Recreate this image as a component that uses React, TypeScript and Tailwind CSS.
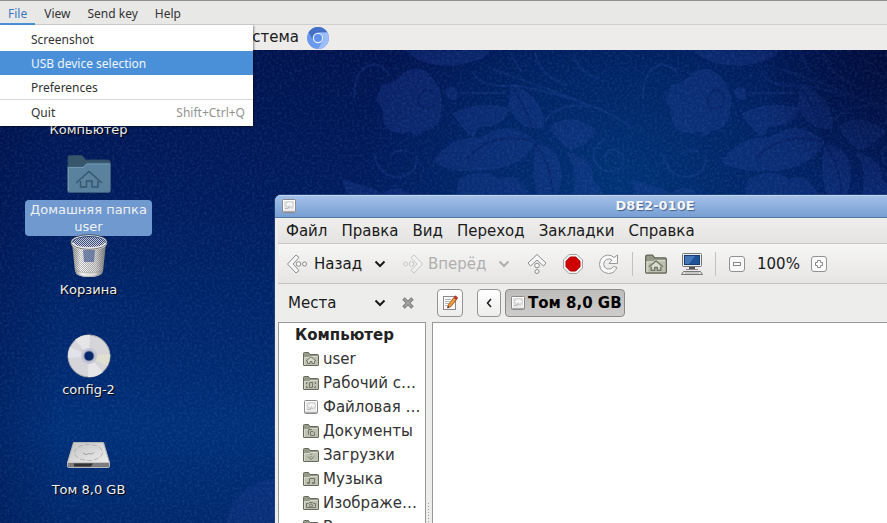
import React from "react";

const INK = "#1a1a1a";

function FolderIcon({ size = 16, children }: { size?: number; children?: React.ReactNode }) {
  return (
    <svg width={size} height={size} viewBox="0 0 16 16" className="shrink-0" aria-hidden="true">
      <path d="M.5 14V2.500Q.5 1.500 1.500 1.500H5.500L7 3.500H14.500Q15.500 3.500 15.500 4.500V14Q15.500 14.500 15 14.500H1Q.5 14.500 .5 14Z" fill="#969a88" stroke="#65685a" />
      <path d="M1 6H6L7 5H15V14H1Z" fill="#bcc0ae" />
      <path d="M1.500 14V6.500H6.500L7.500 5.500H14.500" fill="none" stroke="#d6d9ca" />
      <g fill="none" stroke="#74776a">{children}</g>
    </svg>
  );
}

const HouseGlyph = () => (
  <>
    <path d="M4.500 9V12.500H7V10.500H9V12.500H11.500V9L8 6Z" fill="#d9dccf" stroke="none" />
    <path d="M3 10 8 5.800 13 10M4.500 10V12.500H7V10.500H9V12.500H11.500V10" />
  </>
);

function DriveSmall({ size = 16 }: { size?: number }) {
  return (
    <svg width={size} height={size} viewBox="0 0 16 16" className="shrink-0" aria-hidden="true">
      <rect x="1.500" y="1.500" width="13" height="13" rx="1" fill="#e4e4e4" stroke="#8a8a8a" />
      <path d="M2 12.500H14V14H2Z" fill="#b0b0b0" />
      <rect x="2.500" y="2.500" width="11" height="9.500" fill="none" stroke="#fff" />
      <ellipse cx="8.500" cy="6.500" rx="4" ry="3" fill="#f4f4f4" stroke="#c6c6c6" />
      <path d="M4 10.500H7L8.500 7.500" fill="none" stroke="#b5b5b5" />
    </svg>
  );
}

function Chevron({ color = INK }: { color?: string }) {
  return (
    <svg width="12" height="8" viewBox="0 0 12 8" aria-hidden="true">
      <path d="M1.500 1.500 6 6 10.500 1.500" fill="none" stroke={color} strokeWidth="2" />
    </svg>
  );
}

function ArrowIcon({ className = "", faded = false }: { className?: string; faded?: boolean }) {
  return (
    <svg width="22" height="22" viewBox="0 0 22 22" className={"shrink-0 " + className} opacity={faded ? 0.4 : 1} aria-hidden="true">
      <g fill="#f8f8f8" stroke="#8b8b8b">
        <path d="M10 2 1.500 11 10 20 13 17.500 7 11 13 4.500Z" strokeLinejoin="round" />
        <circle cx="12.500" cy="11" r="2.300" />
        <circle cx="18.500" cy="11" r="2" />
      </g>
    </svg>
  );
}

function StopIcon() {
  return (
    <svg width="22" height="22" viewBox="0 0 22 22" aria-hidden="true">
      <path d="M7 1.500H15L20.500 7V15L15 20.500H7L1.500 15V7Z" fill="#f4f4f4" stroke="#a2a2a2" />
      <path d="M8.300 4H13.700L18 8.300V13.700L13.700 18H8.300L4 13.700V8.300Z" fill="#d00000" stroke="#b00000" />
    </svg>
  );
}

function ReloadIcon() {
  return (
    <svg width="22" height="22" viewBox="0 0 22 22" aria-hidden="true">
      <path
        d="M16 4.500 19.500 2V10.500H11L14 7Q11.500 5 8.500 6.500Q5.500 8.200 5.700 11.500Q6 15 9.500 16Q13.500 16.800 15.500 13.500L19 14.500Q16.500 20.500 10.500 20.500Q2 19.500 1.500 11.500Q1.800 3.500 9.500 2Q13.500 2 16 4.500Z"
        fill="#f8f8f8"
        stroke="#999"
        strokeLinejoin="round"
      />
    </svg>
  );
}

function ComputerIcon() {
  return (
    <svg width="22" height="24" viewBox="0 0 22 24" aria-hidden="true">
      <rect x="1.500" y="1.500" width="19" height="13" rx="1" fill="#ececec" stroke="#777" />
      <rect x="3.500" y="3.500" width="15" height="9" fill="#1f5296" stroke="#163e74" />
      <path d="M4 4H14L8 12H4Z" fill="#4577b8" />
      <path d="M8 15H14V17.500H8Z" fill="#555" />
      <path d="M5 17.500H17" stroke="#888" />
      <path d="M2.500 19.500H19.500L21.500 22.500H.5Z" fill="#e4e4e4" stroke="#777" />
      <path d="M4 21H18" stroke="#aaa" />
    </svg>
  );
}

function ZoomIcon({ plus = false }: { plus?: boolean }) {
  return (
    <svg width="18" height="18" viewBox="0 0 18 18" aria-hidden="true">
      <rect x="1.500" y="1.500" width="15" height="15" rx="2.500" fill="#fafafa" stroke="#929292" />
      {plus ? (
        <path d="M7.500 5.500H10.500V7.500H12.500V10.500H10.500V12.500H7.500V10.500H5.500V7.500H7.500Z" fill="#fff" stroke="#888" />
      ) : (
        <rect x="5.500" y="7.500" width="7" height="3" fill="#fff" stroke="#888" />
      )}
    </svg>
  );
}

function NoteIcon() {
  return (
    <svg width="16" height="16" viewBox="0 0 16 16" aria-hidden="true">
      <rect x="1.500" y="1.500" width="12" height="13" fill="#fcfcfc" stroke="#8a8a8a" />
      <path d="M3 4.500H9M3 6.500H8M3 8.500H7M3 10.500H6" stroke="#b4b4b4" />
      <path d="M5.500 13 6.500 9.500 12 2.500 14.500 4.500 9 11.500Z" fill="#f39a3a" stroke="#8a4b1a" strokeWidth=".8" />
      <path d="M12 2.500 13.500 .8 15.800 2.800 14.500 4.500Z" fill="#d33" stroke="#922" strokeWidth=".6" />
      <path d="M5.500 13 6 11 7.200 12.200Z" fill="#222" />
    </svg>
  );
}

function ChromiumIcon() {
  return (
    <svg width="22" height="22" viewBox="0 0 22 22" aria-hidden="true">
      <circle cx="11" cy="11" r="11" fill="#6a99ee" />
      <path d="M1.500 5.500A11 11 0 0 1 20.500 5.500H11A5.500 5.500 0 0 0 6 13Z" fill="#4471c6" />
      <path d="M20.500 5.500A11 11 0 0 1 11 22L15.800 13.700A5.500 5.500 0 0 0 11 5.500Z" fill="#9dbdf8" />
      <circle cx="11" cy="11" r="5.200" fill="#e6efff" />
      <circle cx="11" cy="11" r="4" fill="#5f90ee" />
    </svg>
  );
}

function HomeFolderLarge() {
  return (
    <svg width="48" height="48" viewBox="0 0 48 48" aria-hidden="true">
      <path d="M3 40V7Q3 5.500 4.500 5.500H16Q17.500 5.500 18.500 7L20.500 10H43Q45 10 45 12V40Z" fill="#38566b" stroke="#2a4862" />
      <path d="M2.500 16.500H18L21.500 13H45.500V40.500Q45.500 42.500 43.500 42.500H4.500Q2.500 42.500 2.500 40.500Z" fill="#5a829f" stroke="#3a5c78" />
      <path d="M3.500 41V17.500H18.500L22 14H44.500" fill="none" stroke="#7096b0" />
      <path d="M11 33 24 21.500 37 33M15.500 31V37H21.500V31H27V37H33V31" fill="none" stroke="#365770" strokeWidth="1.500" />
    </svg>
  );
}

function TrashLarge() {
  return (
    <svg width="48" height="48" viewBox="0 0 48 48" aria-hidden="true">
      <defs>
        <pattern id="mesh" width="2" height="2" patternUnits="userSpaceOnUse">
          <rect width="1" height="1" fill="#777" />
          <rect x="1" y="1" width="1" height="1" fill="#777" />
        </pattern>
        <pattern id="meshInner" width="2" height="2" patternUnits="userSpaceOnUse">
          <rect width="1" height="1" fill="#e4e6ee" />
          <rect x="1" y="1" width="1" height="1" fill="#e4e6ee" />
        </pattern>
        <linearGradient id="can">
          <stop offset="0" stopColor="#8d8d8d" />
          <stop offset=".25" stopColor="#f5f5f5" />
          <stop offset=".7" stopColor="#d8d8d8" />
          <stop offset="1" stopColor="#777" />
        </linearGradient>
      </defs>
      <path d="M7 11 10 39Q11 45 24 45Q37 45 38 39L41 11Z" fill="url(#can)" />
      <path d="M7 11 10 38Q24 44 38 38L41 11Z" fill="url(#mesh)" opacity=".5" />
      <path d="M18 18H30L29 30H19Z" fill="#34508c" opacity=".6" />
      <path d="M10 37Q11 44.500 24 44.500Q37 44.500 38 37Q34 41 24 41Q14 41 10 37Z" fill="url(#can)" stroke="#888" strokeWidth=".5" />
      <ellipse cx="24" cy="10.500" rx="17" ry="6" fill="#3f507e" />
      <ellipse cx="24" cy="10.500" rx="16" ry="5.500" fill="url(#meshInner)" opacity=".8" />
      <path d="M7 11Q9 16.500 24 16.500Q39 16.500 41 11" fill="none" stroke="#e2e2e2" strokeWidth="3" />
      <ellipse cx="24" cy="10" rx="17.500" ry="6.500" fill="none" stroke="#f0f0f0" strokeWidth="1.200" />
      <ellipse cx="24" cy="10" rx="18.300" ry="7.300" fill="none" stroke="#222" strokeWidth=".6" />
    </svg>
  );
}

function DiscLarge() {
  return (
    <svg width="48" height="48" viewBox="0 0 48 48" aria-hidden="true">
      <circle cx="24" cy="24" r="21" fill="#d6d6da" stroke="#a6a6a6" />
      <path d="M24 24 10 8A21 21 0 0 1 25 3ZM24 24 38 40A21 21 0 0 1 23 45Z" fill="#e6e6e8" />
      <path d="M24 24 45 22A21 21 0 0 1 42 34Z" fill="#dfe0cf" />
      <path d="M24 24 3 26A21 21 0 0 1 5 15Z" fill="#e2e2ea" />
      <circle cx="24" cy="24" r="8" fill="#bfc0d2" opacity=".8" />
      <circle cx="24" cy="24" r="5" fill="#06286b" stroke="#7c86a4" />
    </svg>
  );
}

function DriveLarge() {
  return (
    <svg width="48" height="48" viewBox="0 0 48 48" aria-hidden="true">
      <defs>
        <linearGradient id="lid" x1="0" y1="0" x2="1" y2="1">
          <stop offset="0" stopColor="#c4c4c4" />
          <stop offset="1" stopColor="#ececec" />
        </linearGradient>
      </defs>
      <path d="M8.500 10.500H38.500L44.500 30.500H2.500Z" fill="url(#lid)" stroke="#b4b4b4" />
      <ellipse cx="23.500" cy="20.500" rx="14" ry="8" fill="none" stroke="#a8a8a8" strokeWidth=".8" strokeDasharray="5 2" />
      <path d="M18 21Q21 24 24 21.500Q27 23 29 20.500" fill="none" stroke="#a0a0a0" />
      <path d="M2.500 30.500H44.500V34.500Q44.500 35.500 43 35.500H4Q2.500 35.500 2.500 34.500Z" fill="#7d7d7d" stroke="#d0d0d0" strokeWidth=".8" />
      <path d="M9 31.500H28L26 34.500H9Z" fill="#333" />
    </svg>
  );
}

function Wallpaper() {
  const floral = (
    <>
      <g fill="#2a46a0" opacity=".26">
        <path d="M185 30Q260 95 380 62Q420 50 430 30Z" />
        <path d="M120 130Q160 120 180 95Q230 65 262 105Q300 150 290 200Q290 255 235 262Q215 285 205 262Q140 280 122 230Q130 200 104 170Z" />
        <path d="M300 150Q310 125 335 140V170Q310 180 300 150Z" />
        <path d="M322 210Q400 170 485 195Q480 245 400 250L380 280Q345 250 322 210Z" />
        <path d="M490 125Q590 165 585 250Q520 270 482 190Z" />
        <path d="M265 350Q320 270 400 280L440 260Q500 235 560 290Q540 350 450 370Q340 390 265 350Z" />
        <path d="M600 250Q660 200 735 260Q700 310 660 315Q620 290 600 250Z" />
        <path d="M560 300Q640 300 635 400Q630 440 610 462H570Q545 380 560 300Z" />
        <path d="M650 320Q730 340 725 400Q750 420 765 462H660Q690 390 650 320Z" />
        <path d="M340 400Q410 360 460 400Q510 370 555 462H330Z" />
        <path d="M5 400Q90 420 120 440Q180 400 210 462H30Z" />
      </g>
      <g fill="none" stroke="#3b5cb8" strokeWidth="7" opacity=".15" strokeLinecap="round">
        <path d="M40 165Q40 75 100 70Q130 75 140 100" />
        <path d="M345 152H475" />
        <path d="M380 90Q400 140 500 130Q720 170 830 245" />
        <path d="M440 85Q600 140 720 190Q620 180 590 230" />
        <path d="M670 40Q680 90 740 110M560 40Q570 100 650 130M490 40Q500 60 520 90" />
        <path d="M100 330Q110 390 165 392Q220 390 220 335M150 325Q170 310 195 320" />
        <path d="M760 285Q715 310 730 350Q760 390 800 370Q830 335 790 315Q760 310 760 340" />
      </g>
      <g fill="none" stroke="#000c48" strokeWidth="6" opacity=".25">
        <path d="M365 340Q430 260 555 290M560 300Q600 340 610 440M225 165Q250 120 275 165Q275 200 240 195Q220 190 225 165M490 130Q540 200 560 285" />
      </g>
    </>
  );
  return (
    <svg className="absolute inset-0 h-full w-full" viewBox="0 50 887 473" preserveAspectRatio="xMinYMin slice" aria-hidden="true">
      <defs>
        <linearGradient id="sea" x1="0" y1="0" x2="0" y2="1">
          <stop offset="0" stopColor="#00124e" />
          <stop offset=".3" stopColor="#001b5c" />
          <stop offset=".8" stopColor="#002f78" />
          <stop offset="1" stopColor="#00286c" />
        </linearGradient>
        <radialGradient id="glow" cx="620" cy="190" r="260" gradientUnits="userSpaceOnUse">
          <stop offset="0" stopColor="#003478" stopOpacity=".9" />
          <stop offset="1" stopColor="#003478" stopOpacity="0" />
        </radialGradient>
        <radialGradient id="corner" cx="887" cy="60" r="130" gradientUnits="userSpaceOnUse">
          <stop offset="0" stopColor="#000a35" stopOpacity=".8" />
          <stop offset="1" stopColor="#000a35" stopOpacity="0" />
        </radialGradient>
        <linearGradient id="edge">
          <stop offset="0" stopColor="#000a40" stopOpacity=".3" />
          <stop offset="1" stopColor="#000a40" stopOpacity="0" />
        </linearGradient>
        <filter id="grain" x="0" y="0" width="100%" height="100%">
          <feTurbulence type="fractalNoise" baseFrequency=".4" numOctaves="2" seed="4" />
          <feColorMatrix values="0 0 0 0 .15  0 0 0 0 .35  0 0 0 0 .75  1.6 0 0 0 -.65" />
        </filter>
      </defs>
      <rect y="50" width="887" height="473" fill="url(#sea)" />
      <rect y="50" width="887" height="473" fill="url(#glow)" />
      <rect y="50" width="60" height="473" fill="url(#edge)" />
      <g transform="translate(340 40) scale(.349)">{floral}</g>
      <g transform="translate(629 40) scale(.349)">{floral}</g>
      <path d="M225 523Q235 485 275 478V523Z" fill="#2a46a0" opacity=".2" />
      <rect y="50" width="887" height="473" fill="url(#corner)" />
      <rect y="50" width="887" height="473" filter="url(#grain)" opacity=".2" />
    </svg>
  );
}

function DesktopItem({ place, label, icon, selected = false }: { place: string; label: React.ReactNode; icon?: React.ReactNode; selected?: boolean }) {
  return (
    <button type="button" className={"absolute left-[25px] flex w-[127px] flex-col items-center whitespace-nowrap text-[13px] text-[#f0f0f0] " + place}>
      <span className="h-12 w-12">{icon}</span>
      <span
        className={
          selected
            ? "mt-0.5 w-full rounded bg-[#6f99cf] py-px leading-[17px]"
            : "mt-0.5 leading-4 [text-shadow:1px_1px_1px_#000]"
        }
      >
        {label}
      </span>
    </button>
  );
}

const places: { name: string; icon: React.ReactNode }[] = [
  { name: "user", icon: <FolderIcon><HouseGlyph /></FolderIcon> },
  { name: "Рабочий с…", icon: <FolderIcon><path d="M6.500 7.500H9.500V12.500H6.500ZM3.500 9V7.500H4.500M12.500 9V7.500H11.500M3.500 11V12.500H5M12.500 11V12.500H11" /></FolderIcon> },
  { name: "Файловая …", icon: <DriveSmall /> },
  { name: "Документы", icon: <FolderIcon><path d="M5.500 11.500V6.500H9M7.500 12.500V8.500H10L11.500 10V12.500Z" /></FolderIcon> },
  { name: "Загрузки", icon: <FolderIcon><path d="M8 6.500V8M8 9V10M5 9.500 8 12.500 11 9.500" /></FolderIcon> },
  { name: "Музыка", icon: <FolderIcon><path d="M6.500 12V7.500H11.500V11.500M4.500 11.500H6.500V12.500H4.500ZM9.500 11.500H11.500V12.500H9.500Z" /></FolderIcon> },
  { name: "Изображе…", icon: <FolderIcon><path d="M3.500 8.500H5.500L6.500 7.500H9.500L10.500 8.500H12.500V12.500H3.500Z" /><circle cx="8" cy="10.500" r="1.500" /></FolderIcon> },
  { name: "Видео", icon: <FolderIcon /> },
];

function FileManager() {
  return (
    <section
      aria-label="D8E2-010E"
      className="absolute left-[275px] top-[145px] flex h-[560px] w-[760px] flex-col overflow-hidden rounded-t-md bg-[#ededec] pl-[3px] text-[15px] text-[#1a1a1a] shadow-[0_0_0_1px_#1c3f7c]"
    >
      <header className="-ml-[3px] flex h-[23px] shrink-0 items-center border-b border-[#5478a8] bg-linear-to-b from-[#a5c1e8] to-[#779fd3] px-1.5 shadow-[inset_0_1px_0_#c4d7f0]">
        <DriveSmall />
        <h1 className="flex-1 pr-4 text-center text-[13px] font-bold text-[#f4f7fb] [text-shadow:1px_1px_1px_#41618f]">D8E2-010E</h1>
      </header>
      <nav className="flex h-[26px] shrink-0 items-center gap-3.5 border-b border-[#c9c7c5] bg-linear-to-b from-[#efefee] to-[#e4e3e2] px-2 pt-px">
        {["Файл", "Правка", "Вид", "Переход", "Закладки", "Справка"].map((m) => (
          <button type="button" key={m}>{m}</button>
        ))}
      </nav>
      <div className="flex h-10 shrink-0 items-center border-b border-[#c4c2c0] bg-linear-to-b from-[#f6f6f5] to-[#e6e5e4] px-2 pt-px">
        <button type="button" className="flex items-center gap-1.5"><ArrowIcon />Назад</button>
        <button type="button" aria-label="История назад" className="ml-3"><Chevron /></button>
        <button type="button" disabled className="ml-4 flex items-center gap-1 text-[#b0afae]"><ArrowIcon className="rotate-180" faded />Вперёд</button>
        <button type="button" disabled aria-label="История вперёд" className="ml-3"><Chevron color="#b0afae" /></button>
        <div className="ml-4 flex items-center gap-3.5">
          <button type="button" aria-label="Вверх"><ArrowIcon className="rotate-90" /></button>
          <button type="button" aria-label="Остановить"><StopIcon /></button>
          <button type="button" aria-label="Обновить"><ReloadIcon /></button>
        </div>
        <span className="ml-3 h-6 w-px bg-[#c4c2c0]" />
        <div className="ml-3 flex items-center gap-3.5">
          <button type="button" aria-label="Домой"><FolderIcon size={22}><HouseGlyph /></FolderIcon></button>
          <button type="button" aria-label="Компьютер"><ComputerIcon /></button>
        </div>
        <span className="ml-3 h-6 w-px bg-[#c4c2c0]" />
        <div className="ml-3 flex items-center gap-2.5">
          <button type="button" aria-label="Уменьшить"><ZoomIcon /></button>
          <span className="w-11 text-center">100%</span>
          <button type="button" aria-label="Увеличить"><ZoomIcon plus /></button>
        </div>
      </div>
      <div className="flex h-[38px] shrink-0 items-center">
        <div className="flex w-[154px] shrink-0 items-center px-2.5">
          <button type="button" className="flex w-[98px] items-center justify-between">Места<Chevron /></button>
          <button type="button" aria-label="Закрыть" className="ml-4">
            <svg width="12" height="12" viewBox="0 0 12 12" aria-hidden="true">
              <path d="M1.500 1.500 10.500 10.500M10.500 1.500 1.500 10.500" stroke="#777" strokeWidth="3.500" />
              <path d="M2 2 10 10M10 2 2 10" stroke="#aaa" strokeWidth="1.500" />
            </svg>
          </button>
        </div>
        <button type="button" aria-label="Адрес" className="ml-[5px] flex h-7 w-[26px] items-center justify-center rounded border border-[#979593] bg-linear-to-b from-white to-[#ededec]"><NoteIcon /></button>
        <button type="button" aria-label="Предыдущая папка" className="ml-3.5 flex h-7 w-6 items-center justify-center rounded border border-[#979593] bg-linear-to-b from-white to-[#ededec]">
          <svg width="6" height="10" viewBox="0 0 6 10" aria-hidden="true"><path d="M5 1 1.500 5 5 9" fill="none" stroke={INK} strokeWidth="1.500" /></svg>
        </button>
        <button type="button" className="ml-1 flex h-7 items-center gap-0.5 rounded border border-[#8c8a88] bg-linear-to-b from-[#bfbdbb] to-[#cfcdcb] pl-1 pr-0.5 font-bold text-black"><DriveSmall />Том 8,0 GB</button>
      </div>
      <div className="flex min-h-0 flex-1">
        <aside className="w-[148px] shrink-0 border border-[#9a9896] bg-white text-[#333]">
          <h2 className="pl-4 font-bold leading-6 text-[#222]">Компьютер</h2>
          <ul>
            {places.map((p) => (
              <li key={p.name}>
                <button type="button" className="flex h-6 items-center gap-1 whitespace-nowrap pl-6">{p.icon}{p.name}</button>
              </li>
            ))}
          </ul>
        </aside>
        <div className="flex w-1.5 shrink-0 justify-center pt-[180px]">
          <span className="h-10 w-1 bg-[radial-gradient(#a5a3a1_1px,transparent_1px)] bg-size-[3px_3px]" />
        </div>
        <main className="flex-1 border border-[#9a9896] bg-white" />
      </div>
    </section>
  );
}

function FileMenu() {
  const row = "flex h-6 w-full items-center pl-[31px] pr-2 pt-0.5 text-left";
  return (
    <div role="menu" className="absolute left-0 top-full z-10 w-[253px] bg-white text-[#333] shadow-[1px_1px_2px_rgba(0,0,0,0.45)]">
      <div className="pt-0.5">
        <button type="button" role="menuitem" className={row}>Screenshot</button>
        <button type="button" role="menuitem" className={row + " bg-[#4a90d9] text-[#f0f5fb]"}>USB device selection</button>
        <button type="button" role="menuitem" className={row}>Preferences</button>
      </div>
      <div className="border-t border-[#dcdcdc] pb-0.5">
        <button type="button" role="menuitem" className={row + " justify-between"}>
          Quit<span className="text-[#929292]">Shift+Ctrl+Q</span>
        </button>
      </div>
    </div>
  );
}

export default function App() {
  return (
    <div className="flex h-screen flex-col overflow-hidden bg-[#01225f] font-['DejaVu_Sans',sans-serif]">
      <nav className="relative z-20 flex h-[25px] shrink-0 gap-px border-t border-[#8f8f8f] bg-[#e8e8e7] font-['Noto_Sans',sans-serif] text-xs text-[#333] shadow-[inset_0_-1px_0_#cfcfcf]">
        <button type="button" className="border-b-2 border-[#4a90d9] px-2 pt-[3px] text-[#4079c4]">File</button>
        <button type="button" className="px-2 pt-px">View</button>
        <button type="button" className="px-2 pt-px">Send key</button>
        <button type="button" className="px-2 pt-px">Help</button>
        <FileMenu />
      </nav>
      <div className="flex h-[25px] shrink-0 items-center gap-2 bg-[#edeceb] pl-[232px] text-[15px] text-[#1a1a1a]">
        <button type="button">Система</button>
        <button type="button" aria-label="Chromium"><ChromiumIcon /></button>
      </div>
      <div className="relative min-h-0 flex-1 overflow-hidden">
        <Wallpaper />
        <DesktopItem place="top-[22px]" label="Компьютер" />
        <DesktopItem place="top-[100px]" label={<>Домашняя папка<br />user</>} icon={<HomeFolderLarge />} selected />
        <DesktopItem place="top-[182px]" label="Корзина" icon={<TrashLarge />} />
        <DesktopItem place="top-[282px]" label="config-2" icon={<DiscLarge />} />
        <DesktopItem place="top-[382px]" label="Том 8,0 GB" icon={<DriveLarge />} />
        <FileManager />
      </div>
    </div>
  );
}
